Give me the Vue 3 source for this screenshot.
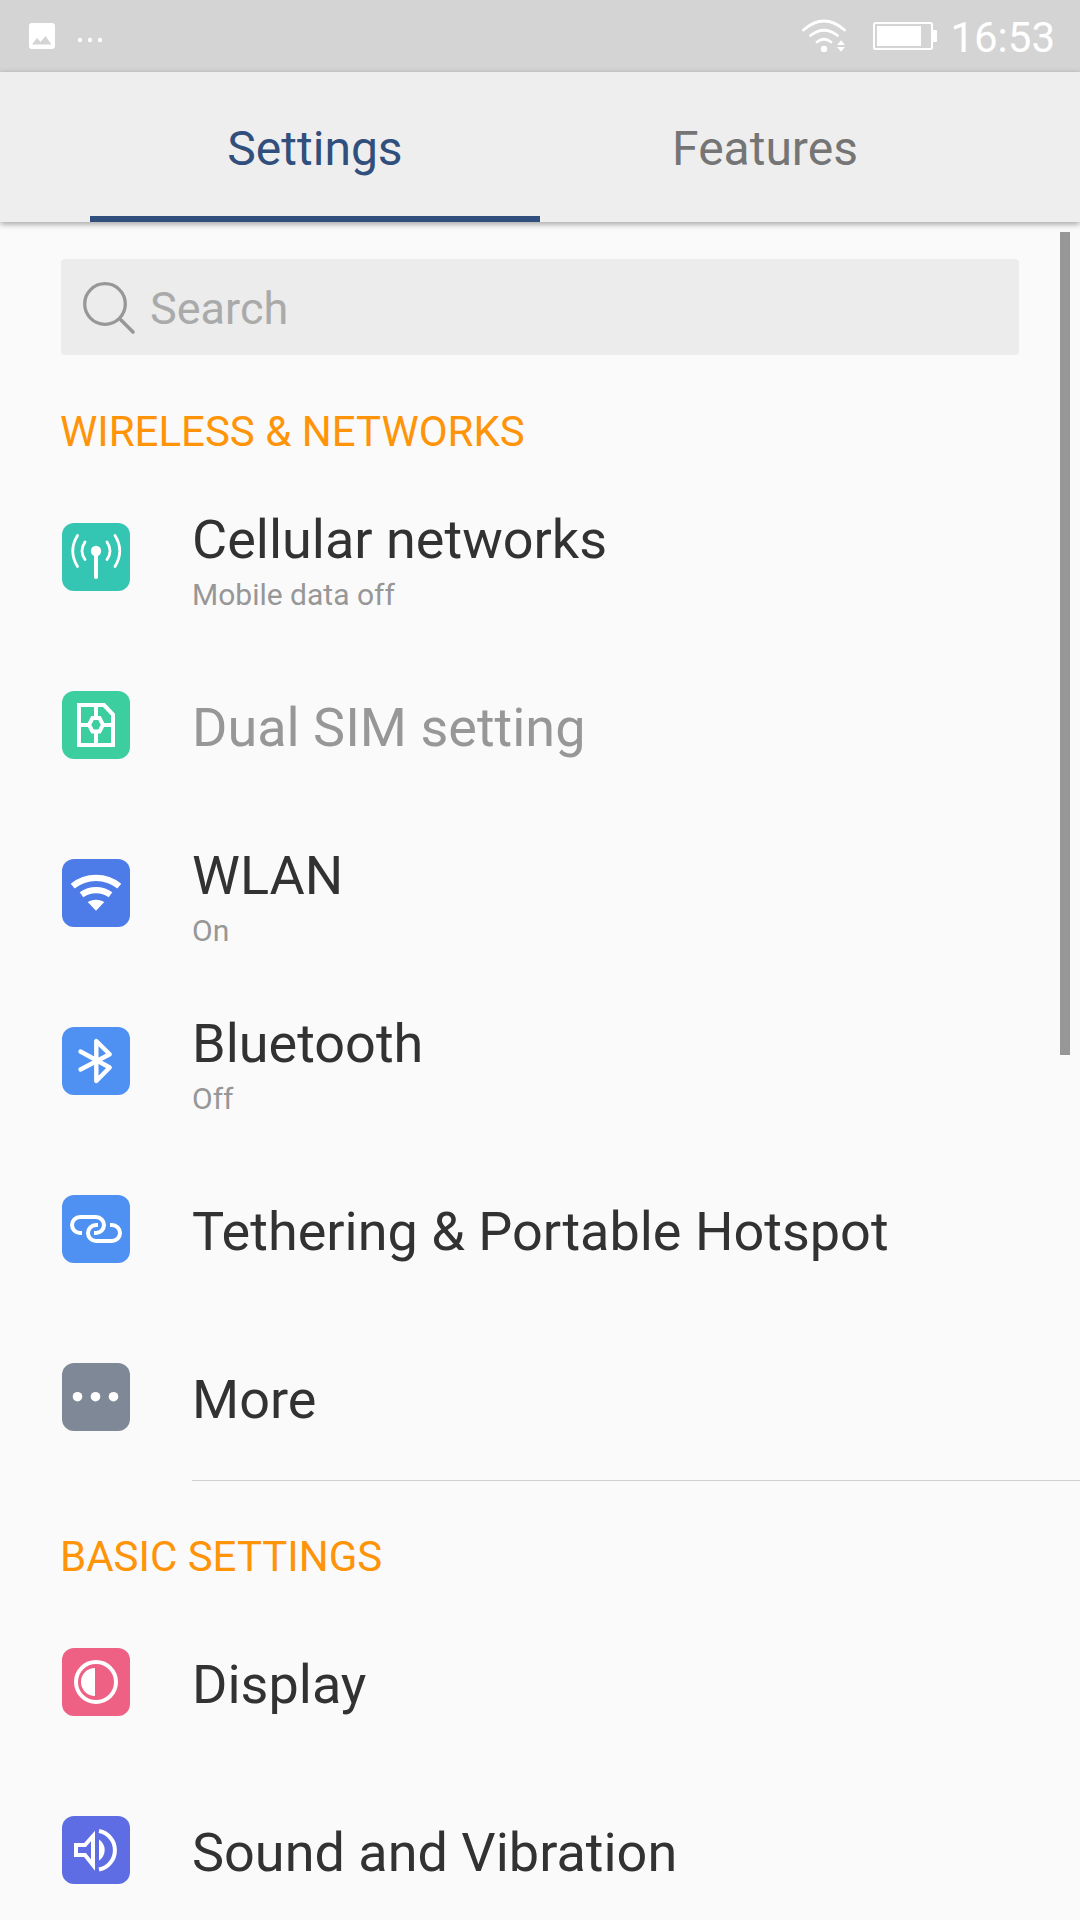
<script setup>
import { ref } from 'vue'

const tabs = ['Settings', 'Features']
const activeTab = ref('Settings')
const query = ref('')

const sections = [
  {
    title: 'WIRELESS & NETWORKS',
    items: [
      { icon: 'cellular', label: 'Cellular networks', note: 'Mobile data off' },
      { icon: 'sim', label: 'Dual SIM setting', disabled: true },
      { icon: 'wlan', label: 'WLAN', note: 'On' },
      { icon: 'bluetooth', label: 'Bluetooth', note: 'Off' },
      { icon: 'tether', label: 'Tethering & Portable Hotspot' },
      { icon: 'more', label: 'More' },
    ],
  },
  {
    title: 'BASIC SETTINGS',
    items: [
      { icon: 'display', label: 'Display' },
      { icon: 'sound', label: 'Sound and Vibration' },
    ],
  },
]
</script>

<template>
  <div class="screen">
    <div class="status">
      <div class="status-group">
        <svg width="26" height="26" viewBox="0 0 26 26" aria-hidden="true">
          <path fill="#fff" fill-rule="evenodd" d="M3 0H23A3 3 0 0 1 26 3V23A3 3 0 0 1 23 26H3A3 3 0 0 1 0 23V3A3 3 0 0 1 3 0ZM3 21.5H22.5L16.5 13L11.5 19L8 15Z" />
        </svg>
        <svg class="dots" width="26" height="6" viewBox="0 0 26 6" fill="#fff" aria-hidden="true">
          <circle cx="3" cy="3" r="2.2" /><circle cx="13" cy="3" r="2.2" /><circle cx="23" cy="3" r="2.2" />
        </svg>
      </div>
      <div class="status-group">
        <svg width="48" height="36" viewBox="0 0 48 36" fill="none" stroke="#fff" stroke-width="2.8" stroke-linecap="round" aria-hidden="true">
          <path d="M3.500 12Q24 -6 44.500 12M10.500 17.500Q24 7 37.500 17.500M17 24Q24 18.500 31 24" />
          <circle cx="24" cy="31" r="3.2" fill="#fff" stroke="none" />
          <path d="M37 27L41 22.300L45 27ZM37 29L41 33.700L45 29Z" fill="#fff" stroke="none" />
        </svg>
        <svg class="battery" width="64" height="28" viewBox="0 0 64 28" aria-hidden="true">
          <rect x="1" y="1" width="58" height="26" rx="1.5" fill="none" stroke="#fff" stroke-width="2" />
          <path fill="#fff" d="M4 4H48V24H4ZM60 8H63Q64 8 64 9V19Q64 20 63 20H60Z" />
        </svg>
        <time>16:53</time>
      </div>
    </div>

    <nav class="tabs" role="tablist">
      <button
        v-for="tab in tabs"
        :key="tab"
        type="button"
        role="tab"
        :aria-selected="activeTab === tab"
        :class="{ active: activeTab === tab }"
        @click="activeTab = tab"
      >{{ tab }}</button>
    </nav>

    <div class="body">
      <main>
        <label class="search">
          <svg width="48" height="48" viewBox="0 0 48 48" fill="none" stroke="#979797" aria-hidden="true">
            <circle cx="23" cy="21" r="20.3" stroke-width="3.3" />
            <path d="M39 37L51 49" stroke-width="3.6" stroke-linecap="round" />
          </svg>
          <input v-model="query" type="text" placeholder="Search" aria-label="Search" />
        </label>

        <section v-for="section in sections" :key="section.title">
          <h2>{{ section.title }}</h2>
          <ul>
            <li v-for="item in section.items" :key="item.icon">
              <button type="button" class="row" :disabled="item.disabled">
                <span class="tile" :class="item.icon">
                  <svg viewBox="0 0 68 68" fill="none" stroke="#fff" stroke-width="4" aria-hidden="true">
                    <template v-if="item.icon === 'cellular'">
                      <circle cx="34" cy="28" r="5.2" fill="#fff" stroke="none" />
                      <path d="M34 29V54" stroke-linecap="round" />
                      <path d="M45 19Q51 28 45 36.500M53 12.500Q62.500 28 53 43.500M23 19Q17 28 23 36.500M15.500 12.500Q6 28 15.500 43.500" stroke-width="2.8" stroke-linecap="round" />
                    </template>
                    <template v-else-if="item.icon === 'sim'">
                      <path d="M17 14H42L51 23.500V54H17ZM30.500 27H37.500L41 33.700L37.500 40.400H30.500L27 33.700ZM34 14V27M34 40V54M17 34H27M41 34H51" />
                    </template>
                    <template v-else-if="item.icon === 'wlan'">
                      <path d="M10.700 27.200A37 37 0 0 1 57.300 27.200M19.500 35.800A25 25 0 0 1 48.500 35.800" stroke-width="6.2" />
                      <path d="M25.700 43Q34 38.500 42.300 43L34 51.800Z" fill="#fff" stroke="none" />
                    </template>
                    <template v-else-if="item.icon === 'bluetooth'">
                      <path d="M18.500 42.500L47.700 27.300L34.300 14V54L47.700 40.500L18.500 24.500" stroke-width="4.4" stroke-linecap="round" stroke-linejoin="round" />
                    </template>
                    <template v-else-if="item.icon === 'tether'">
                      <path d="M20 38H18A8 8 0 0 1 18 22H34A8 8 0 0 1 34 38H32M36 30H34A8 8 0 0 0 34 46H50A8 8 0 0 0 50 30H48" />
                    </template>
                    <template v-else-if="item.icon === 'more'">
                      <g fill="#fff" stroke="none">
                        <circle cx="15.5" cy="33.7" r="4.8" /><circle cx="33.5" cy="33.7" r="4.8" /><circle cx="51.5" cy="33.7" r="4.8" />
                      </g>
                    </template>
                    <template v-else-if="item.icon === 'display'">
                      <circle cx="34" cy="34" r="20" />
                      <path d="M33 20A14 14 0 0 0 33 48Z" fill="#fff" stroke="none" />
                    </template>
                    <template v-else>
                      <path d="M14 29H23L31 20V49L23 39H14ZM37 15A19.600 19.600 0 0 1 37 53.500" />
                      <path d="M37 23.500A12.500 12.500 0 0 1 37 44.500Z" fill="#fff" stroke="none" />
                    </template>
                  </svg>
                </span>
                <span class="text">
                  <span class="label">{{ item.label }}</span>
                  <span v-if="item.note" class="note">{{ item.note }}</span>
                </span>
              </button>
            </li>
          </ul>
        </section>
      </main>
      <div class="scrollbar" aria-hidden="true"></div>
    </div>
  </div>
</template>

<style>
body {
  margin: 0;
  background: #fafafa;
}
</style>

<style scoped>
.screen {
  display: flex;
  flex-direction: column;
  height: 100vh;
  background: #fafafa;
  color: #323232;
  font-family: Roboto, "Noto Sans", sans-serif;
}

button,
input {
  margin: 0;
  padding: 0;
  border: 0;
  background: none;
  font: inherit;
  color: inherit;
}

.status {
  display: flex;
  flex: none;
  align-items: center;
  justify-content: space-between;
  height: 72px;
  padding: 0 25px 0 29px;
  background: #d4d4d4;
  color: #fff;
}

.status-group {
  display: flex;
  align-items: center;
}

.dots {
  margin: 8px 0 0 22px;
}

.battery {
  margin: 0 13px 0 25px;
}

time {
  padding-top: 4px;
  font-size: 42px;
  line-height: 50px;
}

.tabs {
  position: relative;
  z-index: 1;
  display: flex;
  flex: none;
  height: 150px;
  padding: 0 90px;
  background: #eee;
  box-shadow: 0 2px 6px rgba(0, 0, 0, 0.36);
}

.tabs button {
  flex: 1;
  box-sizing: border-box;
  padding-top: 8px;
  border-bottom: 6px solid transparent;
  color: #757575;
  font-size: 48px;
}

.tabs .active {
  border-color: #314f7c;
  color: #314f7c;
}

.body {
  position: relative;
  flex: 1;
  min-height: 0;
}

main {
  height: 100%;
  overflow-y: auto;
  scrollbar-width: none;
}

.scrollbar {
  position: absolute;
  top: 10px;
  right: 10px;
  width: 10px;
  height: 823px;
  background: #979797;
}

.search {
  display: flex;
  align-items: center;
  height: 96px;
  margin: 37px 61px 1px;
  padding-left: 21px;
  border-radius: 4px;
  background: #ececec;
}

.search svg {
  flex: none;
  overflow: visible;
}

.search input {
  flex: 1;
  min-width: 0;
  height: 60px;
  padding: 2px 0 0 20px;
  outline: 0;
  font-size: 45px;
}

.search input::placeholder {
  color: #aaa;
  opacity: 1;
}

h2 {
  margin: 0;
  padding: 51px 60px 16px;
  color: #ff9409;
  font-size: 42px;
  font-weight: 400;
  line-height: 50px;
}

ul {
  margin: 0;
  padding: 0;
  list-style: none;
}

.row {
  display: flex;
  align-items: center;
  width: 100%;
  height: 168px;
  padding-left: 62px;
  text-align: left;
}

.row:disabled {
  color: #979797;
}

section:not(:last-child) li:last-child {
  position: relative;
}

section:not(:last-child) li:last-child::after {
  content: "";
  position: absolute;
  right: 0;
  bottom: 0;
  left: 192px;
  height: 1px;
  background: #d0d0d0;
}

.tile {
  flex: none;
  width: 68px;
  height: 68px;
  border-radius: 12px;
}

.tile svg {
  display: block;
}

.cellular { background: #35c5b3; }
.sim { background: #3dcea0; }
.wlan { background: #4d7ce9; }
.bluetooth,
.tether { background: #4f91f3; }
.more { background: #7f8896; }
.display { background: #ee6184; }
.sound { background: #5f6de5; }

.text {
  display: flex;
  flex-direction: column;
  padding: 6px 0 0 62px;
}

.label {
  font-size: 54px;
  line-height: 64px;
}

.note {
  margin-top: 6px;
  color: #979797;
  font-size: 30px;
  line-height: 34px;
}
</style>
